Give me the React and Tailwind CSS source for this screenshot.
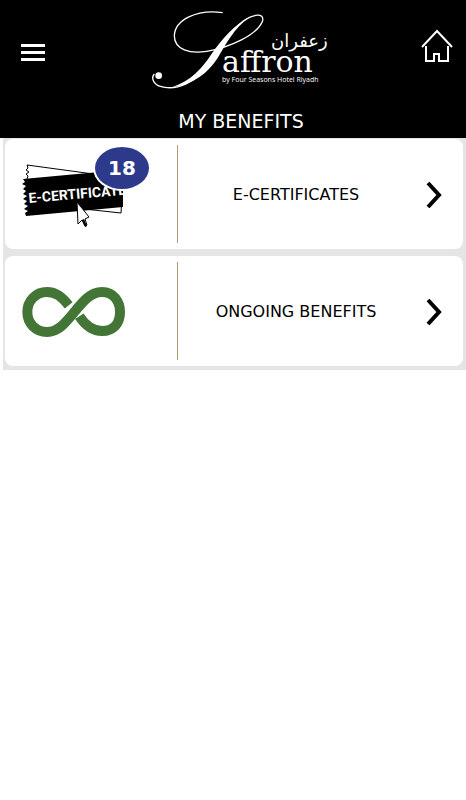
const benefits = [
    { id: "certificates", title: "E-CERTIFICATES", icon: TicketIcon, count: 18 },
    { id: "ongoing", title: "ONGOING BENEFITS", icon: InfinityIcon },
];

function Logo() {
    return (
        <svg viewBox="133 0 200 100" className="w-[200px] h-[100px]" fill="#fff" role="img" aria-label="Saffron">
            <g transform="translate(140 0) scale(0.33333)">
                <path
                    d="M248 38C170 27 104 60 103 108C104 150 150 162 200 154C270 142 352 105 368 62C372 38 340 42 310 63C270 94 240 145 205 195C165 250 110 268 75 262C40 258 32 235 43 222"
                    fill="none"
                    stroke="#fff"
                    strokeWidth="4"
                />
                <path d="M330 50C280 76 245 118 214 163C188 203 155 242 95 262C160 254 204 219 233 174C258 132 282 84 330 50Z" />
                <circle cx="56" cy="227" r="10" />
            </g>
            <text x="222" y="72" className="font-['DejaVu_Serif',serif] text-[30px]">affron</text>
            <text x="271" y="47" className="font-['DejaVu_Sans',sans-serif] text-[18px]">زعفران</text>
            <text x="222" y="82" className="font-['Open_Sans',sans-serif] text-[7px]">by Four Seasons Hotel Riyadh</text>
        </svg>
    );
}

function TicketIcon() {
    return (
        <svg viewBox="20 15 130 98" className="w-[130px] h-[98px]" aria-hidden="true">
            <path
                d="M27 49L28 46L26 44L29 42L26 40L28 38L27 35L123 48L121 83L84 79"
                fill="#fff"
                stroke="#000"
                strokeWidth="1"
            />
            <path d="M23 49L110 41L123 60L123 77L26 86L25 83L28 81L24 79L28 76L24 74L27 71L23 69L27 66L23 64L26 61L23 59L26 56L22 54L25 52Z" />
            <text
                x="29"
                y="73"
                transform="rotate(-5 29 73)"
                fill="#fff"
                className="font-['Roboto',sans-serif] text-[14px] font-bold"
            >
                E-CERTIFICATE
            </text>
            <path d="M77 72L78 94L82 90L85 96L87 95L85 89L89 87Z" fill="#fff" stroke="#000" strokeWidth="1" />
            <path d="M82 90L85 97L87 96L84 89Z" />
        </svg>
    );
}

function InfinityIcon() {
    return (
        <svg viewBox="60 51 390 294" className="w-[130px] h-[98px]" aria-hidden="true">
            <path
                d="M206 181C185 155 168 141 141 141C107 141 82 168 82 201C82 235 107 261 141 261C175 261 195 235 224 200C250 168 272 141 306 141C340 141 360 168 360 201C360 235 340 258 306 258C275 258 255 240 238 214"
                fill="none"
                stroke="#437536"
                strokeWidth="30"
            />
        </svg>
    );
}

function BenefitCard({ title, icon: Icon, count }) {
    return (
        <a href="#" className="flex items-center h-[110px] bg-white rounded-lg">
            <div className="relative w-[172px] pl-[15px] shrink-0">
                <Icon />
                {count && (
                    <span className="absolute left-[88px] top-0 w-[58px] h-[46px] flex items-center justify-center rounded-[50%] border-2 border-white bg-[#2d3a8c] text-white text-[20px] font-bold">
                        {count}
                    </span>
                )}
            </div>
            <div className="w-px h-[98px] bg-[#b09a75]" />
            <span className="flex-1 pt-0.5 text-center text-base">{title}</span>
            <svg viewBox="0 0 16 28" className="w-4 h-7 ml-3 mr-[21px] shrink-0" aria-hidden="true">
                <path d="M2 3L13 15L2 27" fill="none" stroke="#000" strokeWidth="4" />
            </svg>
        </a>
    );
}

export default function App() {
    return (
        <div className="min-h-screen bg-white text-black font-['DejaVu_Sans',sans-serif]">
            <header className="bg-black text-white h-[138px]">
                <div className="flex items-center justify-between pl-[21px] pr-[13px]">
                    <button aria-label="Menu" className="w-6 flex flex-col gap-1 pt-1">
                        <span className="h-[3px] w-full bg-white" />
                        <span className="h-[3px] w-full bg-white" />
                        <span className="h-[3px] w-full bg-white" />
                    </button>
                    <Logo />
                    <a href="#" aria-label="Home" className="pb-2">
                        <svg viewBox="0 0 32 34" className="w-8 h-[34px]" fill="none" stroke="#fff" strokeWidth="2">
                            <path d="M1 18L16 2L31 18M5 17V32H13V25H18V32H27V17" />
                        </svg>
                    </a>
                </div>
                <h1 className="pl-4 pt-[7px] text-center text-[19px] leading-7">MY BENEFITS</h1>
            </header>
            <main className="ml-[3px] pl-0.5 pr-[3px] pt-px pb-1 flex flex-col gap-[7px] bg-[#e5e5e5]">
                {benefits.map((benefit) => (
                    <BenefitCard key={benefit.id} {...benefit} />
                ))}
            </main>
        </div>
    );
}
